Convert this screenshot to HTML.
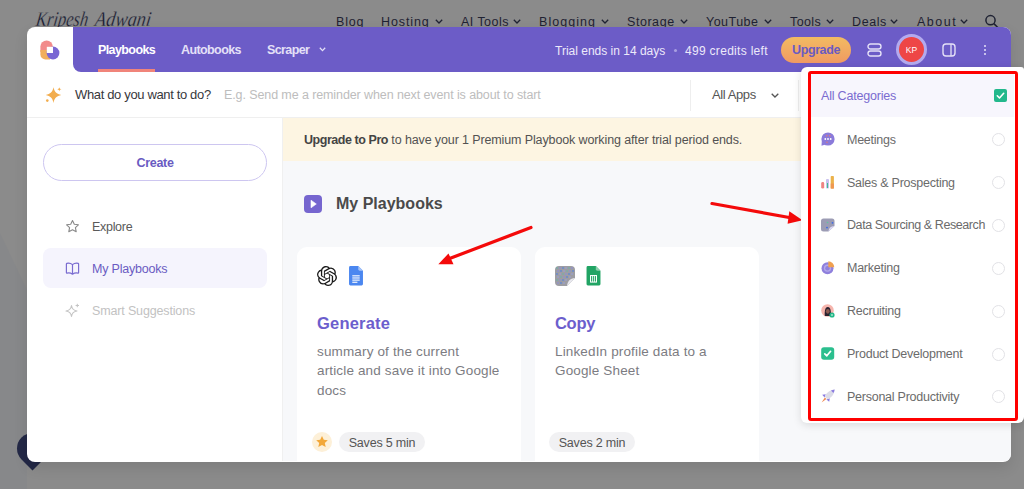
<!DOCTYPE html>
<html><head><meta charset="utf-8">
<style>
*{margin:0;padding:0;box-sizing:border-box}
html,body{width:1024px;height:489px;overflow:hidden}
body{background:#8b8b8b;font-family:"Liberation Sans",sans-serif;position:relative}
.a{position:absolute;white-space:nowrap;line-height:1}
.nav{font-size:12.5px;color:#1f2233;top:16px}
.chev{position:absolute;width:5px;height:5px;border-right:1.4px solid #1f2233;border-bottom:1.4px solid #1f2233;transform:rotate(45deg)}
#win{position:absolute;left:27px;top:27px;width:984px;height:435px;background:#fff;border-radius:8px;overflow:hidden;box-shadow:0 6px 14px rgba(0,0,0,0.1)}
#hdr{position:absolute;left:46px;top:0;width:938px;height:45px;background:#6c5cc7;border-bottom-left-radius:8px}
.tab{font-size:12.5px;font-weight:700;letter-spacing:-0.6px;top:17px}
</style></head>
<body>
<!-- website nav -->
<svg class="a" style="left:0;top:0" width="170" height="30" viewBox="0 0 170 30"><g font-family="Liberation Serif" font-style="italic" font-size="21" fill="#1a1d33" stroke="#8b8b8b" stroke-width="0.3" paint-order="fill stroke" transform="skewX(-8)"><text x="39" y="26" textLength="52" lengthAdjust="spacingAndGlyphs">Kripesh</text><text x="98" y="26" textLength="56" lengthAdjust="spacingAndGlyphs">Adwani</text></g></svg>
<div class="a nav" style="left:336px;letter-spacing:0.85px">Blog</div>
<div class="a nav" style="left:381px;letter-spacing:0.9px">Hosting</div>
<div class="a nav" style="left:461px;letter-spacing:0.45px">AI Tools</div>
<div class="a nav" style="left:539px;letter-spacing:1.05px">Blogging</div>
<div class="a nav" style="left:627px;letter-spacing:0.55px">Storage</div>
<div class="a nav" style="left:706px;letter-spacing:0.48px">YouTube</div>
<div class="a nav" style="left:790px;letter-spacing:0.38px">Tools</div>
<div class="a nav" style="left:852px;letter-spacing:0.6px">Deals</div>
<div class="a nav" style="left:917px;letter-spacing:1.5px">About</div>
<svg class="a" style="left:434.5px;top:18.6px" width="8" height="5" viewBox="0 0 8 5"><path d="M0.8 0.8 L4 4 L7.2 0.8" fill="none" stroke="#1f2233" stroke-width="1.3"/></svg><svg class="a" style="left:512.7px;top:18.6px" width="8" height="5" viewBox="0 0 8 5"><path d="M0.8 0.8 L4 4 L7.2 0.8" fill="none" stroke="#1f2233" stroke-width="1.3"/></svg><svg class="a" style="left:600.5px;top:18.6px" width="8" height="5" viewBox="0 0 8 5"><path d="M0.8 0.8 L4 4 L7.2 0.8" fill="none" stroke="#1f2233" stroke-width="1.3"/></svg><svg class="a" style="left:680.0px;top:18.6px" width="8" height="5" viewBox="0 0 8 5"><path d="M0.8 0.8 L4 4 L7.2 0.8" fill="none" stroke="#1f2233" stroke-width="1.3"/></svg><svg class="a" style="left:763.5px;top:18.6px" width="8" height="5" viewBox="0 0 8 5"><path d="M0.8 0.8 L4 4 L7.2 0.8" fill="none" stroke="#1f2233" stroke-width="1.3"/></svg><svg class="a" style="left:826.0px;top:18.6px" width="8" height="5" viewBox="0 0 8 5"><path d="M0.8 0.8 L4 4 L7.2 0.8" fill="none" stroke="#1f2233" stroke-width="1.3"/></svg><svg class="a" style="left:890.0px;top:18.6px" width="8" height="5" viewBox="0 0 8 5"><path d="M0.8 0.8 L4 4 L7.2 0.8" fill="none" stroke="#1f2233" stroke-width="1.3"/></svg><svg class="a" style="left:959.7px;top:18.6px" width="8" height="5" viewBox="0 0 8 5"><path d="M0.8 0.8 L4 4 L7.2 0.8" fill="none" stroke="#1f2233" stroke-width="1.3"/></svg>
<svg class="a" style="left:984px;top:13px" width="16" height="16" viewBox="0 0 16 16"><circle cx="6.5" cy="7.2" r="4.6" fill="none" stroke="#1f2233" stroke-width="1.5"/><line x1="9.9" y1="10.6" x2="14" y2="14.7" stroke="#1f2233" stroke-width="1.5"/></svg>
<!-- chat bubble behind -->
<svg class="a" style="left:0;top:200px" width="200" height="289" viewBox="0 200 200 289"><path d="M0 233 L27 290 L27 489 L0 489Z" fill="#87888a"/></svg>
<div class="a" style="left:17px;top:433px;width:31px;height:31px;background:#232846;border-radius:50% 50% 50% 0;transform:rotate(-45deg)"></div>

<div id="win">
  <div id="hdr">
    <div class="a tab" style="left:25px;color:#fff">Playbooks</div>
    <div class="a" style="left:25px;top:42px;width:57px;height:3px;background:#f0847a"></div>
    <div class="a tab" style="left:108px;color:#e4e0f7">Autobooks</div>
    <div class="a tab" style="left:194px;color:#e4e0f7">Scraper</div>
    <svg class="a" style="left:245.6px;top:19.6px" width="7" height="5" viewBox="0 0 7 5"><path d="M0.8 0.8 L3.5 3.6 L6.2 0.8" fill="none" stroke="#e4e0f7" stroke-width="1.3"/></svg>
    <div class="a" style="left:482px;top:18px;font-size:12px;color:#ece9fa">Trial ends in 14 days</div>
    <div class="a" style="left:601px;top:22px;width:3px;height:3px;border-radius:50%;background:#a99fe2"></div>
    <div class="a" style="left:612px;top:18px;font-size:12px;letter-spacing:0.3px;color:#ece9fa">499 credits left</div>
    <div class="a" style="left:708px;top:10px;width:70px;height:26px;border-radius:13px;background:linear-gradient(#f2bb62,#f09a62)"></div>
    <div class="a" style="left:708px;top:17px;width:70px;text-align:center;font-size:12.5px;font-weight:700;letter-spacing:-0.4px;color:#6a5bc2">Upgrade</div>
    <svg class="a" style="left:794px;top:16px" width="15" height="14" viewBox="0 0 15 14"><rect x="1" y="1" width="13" height="5" rx="2.5" fill="none" stroke="#e4e0f7" stroke-width="1.4"/><rect x="1" y="8" width="13" height="5" rx="2.5" fill="none" stroke="#e4e0f7" stroke-width="1.4"/></svg>
    <div class="a" style="left:823px;top:7px;width:31px;height:31px;border-radius:50%;background:#ee4646;border:3px solid #b3aaee"></div>
    <div class="a" style="left:823px;top:19px;width:31px;text-align:center;font-size:8.5px;color:#fff">KP</div>
    <svg class="a" style="left:869px;top:16px" width="14" height="14" viewBox="0 0 14 14"><rect x="1" y="1" width="12" height="12" rx="3" fill="none" stroke="#e4e0f7" stroke-width="1.4"/><line x1="9" y1="1" x2="9" y2="13" stroke="#e4e0f7" stroke-width="1.3"/></svg>
    <div class="a" style="left:911px;top:18px;width:2px;height:2px;background:#e4e0f7;border-radius:1px"></div>
    <div class="a" style="left:911px;top:22px;width:2px;height:2px;background:#e4e0f7;border-radius:1px"></div>
    <div class="a" style="left:911px;top:26px;width:2px;height:2px;background:#e4e0f7;border-radius:1px"></div>
  </div>

  <!-- logo -->
  <svg class="a" style="left:13px;top:13px" width="20" height="20" viewBox="0 0 20 20">
    <path d="M0.4 6.6 A6.2 6.2 0 0 1 12.8 6.6 V12 H0.4Z" fill="#f28b8b"/>
    <path d="M0.4 10 H10 V19.4 H5.4 A5 5 0 0 1 0.4 14.4Z" fill="#f1ae5c"/>
    <circle cx="13" cy="13" r="6.4" fill="#7967d4"/>
    <rect x="6.8" y="6.8" width="6.2" height="6.2" fill="#fff"/>
  </svg>
  <!-- row 2 -->
  <svg class="a" style="left:17px;top:59px" width="19" height="19" viewBox="0 0 19 19"><path d="M9.5 1.3 C10.4 5.8 12.6 8 17.3 9 C12.6 10 10.4 12.2 9.5 17 C8.6 12.2 6.4 10 1.7 9 C6.4 8 8.6 5.8 9.5 1.3Z" fill="#f2ad4e"/><path d="M15.3 0.9 C15.5 2.4 15.9 2.9 17.5 3.2 C15.9 3.5 15.5 4 15.3 5.5 C15.1 4 14.7 3.5 13.1 3.2 C14.7 2.9 15.1 2.4 15.3 0.9Z" fill="#f2ad4e"/><circle cx="3.3" cy="14.6" r="1.3" fill="#f2ad4e"/></svg>
  <div class="a" style="left:48px;top:61px;font-size:13px;letter-spacing:-0.35px;color:#38383c">What do you want to do?</div>
  <div class="a" style="left:197px;top:62px;font-size:12.5px;letter-spacing:-0.1px;color:#bdbdbd">E.g. Send me a reminder when next event is about to start</div>
  <div class="a" style="left:663px;top:53px;width:1px;height:31px;background:#eeeeee"></div>
  <div class="a" style="left:685px;top:61px;font-size:13px;letter-spacing:-0.4px;color:#555">All Apps</div>
  <svg class="a" style="left:743.5px;top:65.6px" width="8" height="5" viewBox="0 0 8 5"><path d="M0.7 0.7 L4 4 L7.3 0.7" fill="none" stroke="#555" stroke-width="1.3"/></svg>
  <div class="a" style="left:771px;top:53px;width:1px;height:31px;background:#eeeeee"></div>
  <div class="a" style="left:0;top:90px;width:984px;height:1px;background:#efefef"></div>
  <!-- sidebar -->
  <div class="a" style="left:255px;top:90px;width:1px;height:344px;background:#f0f0f0"></div>
  <div class="a" style="left:16px;top:117px;width:224px;height:37px;border-radius:19px;border:1px solid #cdc6f0"></div>
  <div class="a" style="left:16px;top:130px;width:224px;text-align:center;font-size:12.5px;font-weight:700;letter-spacing:-0.3px;color:#6a5bc2">Create</div>
  <svg class="a" style="left:38px;top:192px" width="15" height="15" viewBox="0 0 15 15"><path d="M7.5 1.5 L9.3 5.3 L13.4 5.8 L10.4 8.6 L11.2 12.7 L7.5 10.7 L3.8 12.7 L4.6 8.6 L1.6 5.8 L5.7 5.3Z" fill="none" stroke="#8a8a8a" stroke-width="1.1" stroke-linejoin="round"/></svg>
  <div class="a" style="left:65px;top:194px;font-size:12.5px;letter-spacing:-0.3px;color:#5a5a5a">Explore</div>
  <div class="a" style="left:16px;top:221px;width:224px;height:40px;border-radius:8px;background:#f5f4fd"></div>
  <svg class="a" style="left:38px;top:234px" width="15" height="15" viewBox="0 0 15 15"><path d="M7.5 3.6 C6 2.4 3.8 2 1.8 2.4 C1.5 2.5 1.4 2.7 1.4 3 L1.4 11.6 C1.4 12 1.7 12.2 2 12.1 C4 11.7 6 12.1 7.5 13.2 C9 12.1 11 11.7 13 12.1 C13.3 12.2 13.6 12 13.6 11.6 L13.6 3 C13.6 2.7 13.5 2.5 13.2 2.4 C11.2 2 9 2.4 7.5 3.6Z M7.5 3.6 L7.5 13.2" fill="none" stroke="#7a6cd0" stroke-width="1.2" stroke-linejoin="round"/></svg>
  <div class="a" style="left:65px;top:236px;font-size:12.5px;letter-spacing:-0.2px;color:#6a5bc2">My Playbooks</div>
  <svg class="a" style="left:38px;top:276px" width="15" height="15" viewBox="0 0 15 15"><path d="M6.5 2.5 C7 6.2 8.3 7.5 12 8 C8.3 8.5 7 9.8 6.5 13.5 C6 9.8 4.7 8.5 1 8 C4.7 7.5 6 6.2 6.5 2.5Z" fill="none" stroke="#c4c4c4" stroke-width="1.1" stroke-linejoin="round"/><path d="M12.3 0.8 V4.2 M10.6 2.5 H14" stroke="#c4c4c4" stroke-width="1"/></svg>
  <div class="a" style="left:65px;top:278px;font-size:12.5px;letter-spacing:-0.3px;color:#c2c2c2;letter-spacing:-0.15px">Smart Suggestions</div>
  <!-- main -->
  <div class="a" style="left:256px;top:91px;width:728px;height:343px;background:#f7f8fa"></div>
  <div class="a" style="left:256px;top:91px;width:728px;height:43px;background:#fdf5e2"></div>
  <div class="a" style="left:277px;top:107px;font-size:12.5px;letter-spacing:-0.12px;color:#525252"><b style="letter-spacing:-0.45px;color:#444">Upgrade to Pro</b> to have your 1 Premium Playbook working after trial period ends.</div>
  <div class="a" style="left:277px;top:167.5px;width:18px;height:18px;border-radius:4px;background:#7666cf"></div>
  <svg class="a" style="left:277px;top:167.5px" width="18" height="18" viewBox="0 0 18 18"><path d="M7 5.2 L12.3 9 L7 12.8Z" fill="#fff" stroke="#fff" stroke-width="0.6" stroke-linejoin="round"/></svg>
  <div class="a" style="left:309px;top:168.5px;font-size:16px;font-weight:700;letter-spacing:0px;color:#4a4a4a">My Playbooks</div>
  <!-- card 1 -->
  <div class="a" style="left:270px;top:220px;width:224px;height:240px;border-radius:10px;background:#fff"></div>
  <div class="a" style="left:290px;top:288px;font-size:16.5px;font-weight:700;letter-spacing:0.2px;color:#6c5ecd">Generate</div>
  <div class="a" style="left:290px;top:315px;font-size:13.5px;line-height:19.3px;letter-spacing:0.15px;color:#7c7c82;white-space:normal;width:190px">summary of the current<br>article and save it into Google<br>docs</div>
  <div class="a" style="left:285px;top:405px;width:20px;height:20px;border-radius:50%;background:#fdf0d8"></div>
  <svg class="a" style="left:287px;top:407px" width="16" height="16" viewBox="0 0 16 16"><path d="M8 2 L9.8 5.8 L13.8 6.2 L10.8 9 L11.7 13 L8 11 L4.3 13 L5.2 9 L2.2 6.2 L6.2 5.8Z" fill="#f2a83a"/></svg>
  <div class="a" style="left:312px;top:405px;width:86px;height:20px;border-radius:10px;background:#f1f1f3"></div>
  <div class="a" style="left:312px;top:410px;width:86px;text-align:center;font-size:12.5px;letter-spacing:-0.2px;color:#555">Saves 5 min</div>
  <!-- card icons -->
  <svg class="a" style="left:289.5px;top:238.5px" width="20" height="20" viewBox="0 0 24 24"><path fill="#1a1a1a" d="M22.28 9.82a5.98 5.98 0 0 0-.52-4.91 6.05 6.05 0 0 0-6.51-2.9A6.07 6.07 0 0 0 4.98 4.18a5.98 5.98 0 0 0-4 2.9 6.05 6.05 0 0 0 .74 7.1 5.98 5.98 0 0 0 .51 4.91 6.05 6.05 0 0 0 6.52 2.9A5.98 5.98 0 0 0 13.26 24a6.06 6.06 0 0 0 5.77-4.21 5.99 5.99 0 0 0 4-2.9 6.06 6.06 0 0 0-.75-7.07zM13.26 22.43a4.48 4.48 0 0 1-2.88-1.04l.14-.08 4.78-2.76a.8.8 0 0 0 .39-.68v-6.74l2.02 1.17a.07.07 0 0 1 .04.05v5.58a4.5 4.5 0 0 1-4.49 4.5zM3.6 18.3a4.47 4.47 0 0 1-.54-3.01l.14.09 4.78 2.76a.77.77 0 0 0 .78 0l5.84-3.37v2.33a.08.08 0 0 1-.03.06L9.74 19.95a4.5 4.5 0 0 1-6.14-1.65zM2.34 7.9a4.48 4.48 0 0 1 2.37-1.97V11.6a.77.77 0 0 0 .39.68l5.81 3.35-2.02 1.17a.08.08 0 0 1-.07 0l-4.83-2.79A4.5 4.5 0 0 1 2.34 7.87zm16.6 3.86-5.84-3.39 2.02-1.16a.08.08 0 0 1 .07 0l4.83 2.79a4.49 4.49 0 0 1-.68 8.1v-5.68a.79.79 0 0 0-.4-.66zm2.01-3.02-.14-.09-4.77-2.78a.78.78 0 0 0-.79 0L9.41 9.23V6.9a.07.07 0 0 1 .03-.06l4.83-2.79a4.5 4.5 0 0 1 6.68 4.66zM8.31 12.86 6.29 11.7a.08.08 0 0 1-.04-.06V6.08a4.5 4.5 0 0 1 7.38-3.45l-.14.08L8.7 5.46a.8.8 0 0 0-.39.68zm1.1-2.37 2.6-1.5 2.61 1.5v3l-2.6 1.5-2.61-1.5z"/></svg>
  <svg class="a" style="left:321.5px;top:239px" width="14" height="19.5" viewBox="0 0 15 21"><path d="M1.5 0 H10 L15 5 V19.5 A1.5 1.5 0 0 1 13.5 21 H1.5 A1.5 1.5 0 0 1 0 19.5 V1.5 A1.5 1.5 0 0 1 1.5 0Z" fill="#4b87f0"/><path d="M10 0 L15 5 H11.5 A1.5 1.5 0 0 1 10 3.5Z" fill="#a7c5f8"/><rect x="3.5" y="10" width="8" height="1.2" fill="#fff"/><rect x="3.5" y="12.3" width="8" height="1.2" fill="#fff"/><rect x="3.5" y="14.6" width="8" height="1.2" fill="#fff"/><rect x="3.5" y="16.9" width="5.5" height="1.2" fill="#fff"/></svg>
  <!-- card 2 -->
  <div class="a" style="left:508px;top:220px;width:224px;height:240px;border-radius:10px;background:#fff"></div>
  <div class="a" style="left:528px;top:288px;font-size:16.5px;font-weight:700;letter-spacing:-0.3px;color:#6c5ecd">Copy</div>
  <div class="a" style="left:528px;top:315px;font-size:13.5px;line-height:19.3px;letter-spacing:0.15px;color:#7c7c82;white-space:normal;width:190px">LinkedIn profile data to a<br>Google Sheet</div>
  <svg class="a" style="left:528px;top:238.5px" width="20" height="20" viewBox="0 0 20 20"><path d="M4 0 H16 A4 4 0 0 1 20 4 V12 L12 20 H4 A4 4 0 0 1 0 16 V4 A4 4 0 0 1 4 0Z" fill="#9d9da3"/><circle cx="2" cy="2" r="0.75" fill="#5fb8a8"/><circle cx="5" cy="2" r="0.75" fill="#8a8ae8"/><circle cx="8" cy="2" r="0.75" fill="#3a7af0"/><circle cx="11" cy="2" r="0.75" fill="#9aa0e8"/><circle cx="14" cy="2" r="0.75" fill="#5fb8a8"/><circle cx="17" cy="2" r="0.75" fill="#8a8ae8"/><circle cx="3" cy="5" r="0.75" fill="#8a8ae8"/><circle cx="6" cy="5" r="0.75" fill="#3a7af0"/><circle cx="9" cy="5" r="0.75" fill="#9aa0e8"/><circle cx="12" cy="5" r="0.75" fill="#5fb8a8"/><circle cx="15" cy="5" r="0.75" fill="#8a8ae8"/><circle cx="18" cy="5" r="0.75" fill="#3a7af0"/><circle cx="2" cy="8" r="0.75" fill="#3a7af0"/><circle cx="5" cy="8" r="0.75" fill="#9aa0e8"/><circle cx="8" cy="8" r="0.75" fill="#5fb8a8"/><circle cx="11" cy="8" r="0.75" fill="#8a8ae8"/><circle cx="14" cy="8" r="0.75" fill="#3a7af0"/><circle cx="17" cy="8" r="0.75" fill="#9aa0e8"/><circle cx="3" cy="11" r="0.75" fill="#9aa0e8"/><circle cx="6" cy="11" r="0.75" fill="#5fb8a8"/><circle cx="9" cy="11" r="0.75" fill="#8a8ae8"/><circle cx="12" cy="11" r="0.75" fill="#3a7af0"/><circle cx="15" cy="11" r="0.75" fill="#9aa0e8"/><circle cx="2" cy="14" r="0.75" fill="#5fb8a8"/><circle cx="5" cy="14" r="0.75" fill="#8a8ae8"/><circle cx="8" cy="14" r="0.75" fill="#3a7af0"/><circle cx="11" cy="14" r="0.75" fill="#9aa0e8"/><circle cx="3" cy="17" r="0.75" fill="#8a8ae8"/><circle cx="6" cy="17" r="0.75" fill="#3a7af0"/><circle cx="9" cy="17" r="0.75" fill="#9aa0e8"/><path d="M20 12 L12 20 C12.5 15 15 12.5 20 12Z" fill="#e8e8ee"/></svg>
  <svg class="a" style="left:559px;top:239px" width="15" height="19.5" viewBox="0 0 15 21"><path d="M1.5 0 H10 L15 5 V19.5 A1.5 1.5 0 0 1 13.5 21 H1.5 A1.5 1.5 0 0 1 0 19.5 V1.5 A1.5 1.5 0 0 1 1.5 0Z" fill="#21a464"/><path d="M10 0 L15 5 H11.5 A1.5 1.5 0 0 1 10 3.5Z" fill="#8ed1ae"/><rect x="4.3" y="10.3" width="6.4" height="7" fill="none" stroke="#fff" stroke-width="1.1"/><line x1="6.5" y1="10.3" x2="6.5" y2="17.3" stroke="#fff" stroke-width="0.9"/><line x1="8.5" y1="10.3" x2="8.5" y2="17.3" stroke="#fff" stroke-width="0.9"/></svg>
  <div class="a" style="left:522px;top:405px;width:86px;height:20px;border-radius:10px;background:#f1f1f3"></div>
  <div class="a" style="left:522px;top:410px;width:86px;text-align:center;font-size:12.5px;letter-spacing:-0.2px;color:#555">Saves 2 min</div>
</div>

<svg class="a" style="left:0;top:0" width="1024" height="489" viewBox="0 0 1024 489">
  <line x1="531" y1="227.5" x2="447" y2="259.5" stroke="#f40a0a" stroke-width="3.2" stroke-linecap="round"/>
  <path d="M438.3 264.3 L448.5 253.5 L453.5 264.3Z" fill="#f40a0a"/>
  <line x1="712" y1="203.5" x2="792" y2="218" stroke="#f40a0a" stroke-width="3.2" stroke-linecap="round"/>
  <path d="M802.5 220.3 L789.3 211.3 L787.6 223.7Z" fill="#f40a0a"/>
</svg>
<!-- dropdown -->
<div class="a" style="left:801px;top:67px;width:223px;height:356px;background:#fff;border-radius:6px 3px 6px 6px;box-shadow:0 2px 8px rgba(0,0,0,0.12)">
  <div class="a" style="left:10px;top:7px;width:203px;height:43px;background:#f7f6fd"></div>
  <div class="a" style="left:20px;top:23px;font-size:12.5px;letter-spacing:-0.2px;color:#7a6bd0">All Categories</div>
  <div class="a" style="left:193px;top:22px;width:13px;height:13px;border-radius:2px;background:#22b88c"></div>
  <svg class="a" style="left:193px;top:22px" width="13" height="13" viewBox="0 0 13 13"><path d="M3.3 6.8 L5.5 9 L9.7 4.3" fill="none" stroke="#fff" stroke-width="1.6" stroke-linecap="round" stroke-linejoin="round"/></svg>
  <div class="a" style="left:46px;top:66.5px;font-size:12.5px;letter-spacing:-0.25px;color:#6b6b6b">Meetings</div>
  <div class="a" style="left:191px;top:66.0px;width:13px;height:13px;border-radius:50%;border:1.3px solid #e2e2e6"></div>
  <div class="a" style="left:46px;top:109.5px;font-size:12.5px;letter-spacing:-0.25px;color:#6b6b6b">Sales &amp; Prospecting</div>
  <div class="a" style="left:191px;top:109.0px;width:13px;height:13px;border-radius:50%;border:1.3px solid #e2e2e6"></div>
  <div class="a" style="left:46px;top:152.0px;font-size:12.5px;letter-spacing:-0.25px;color:#6b6b6b;letter-spacing:-0.42px">Data Sourcing &amp; Research</div>
  <div class="a" style="left:191px;top:151.5px;width:13px;height:13px;border-radius:50%;border:1.3px solid #e2e2e6"></div>
  <div class="a" style="left:46px;top:195.0px;font-size:12.5px;letter-spacing:-0.25px;color:#6b6b6b">Marketing</div>
  <div class="a" style="left:191px;top:194.5px;width:13px;height:13px;border-radius:50%;border:1.3px solid #e2e2e6"></div>
  <div class="a" style="left:46px;top:238.0px;font-size:12.5px;letter-spacing:-0.25px;color:#6b6b6b">Recruiting</div>
  <div class="a" style="left:191px;top:237.5px;width:13px;height:13px;border-radius:50%;border:1.3px solid #e2e2e6"></div>
  <div class="a" style="left:46px;top:281.0px;font-size:12.5px;letter-spacing:-0.25px;color:#6b6b6b">Product Development</div>
  <div class="a" style="left:191px;top:280.5px;width:13px;height:13px;border-radius:50%;border:1.3px solid #e2e2e6"></div>
  <div class="a" style="left:46px;top:323.5px;font-size:12.5px;letter-spacing:-0.25px;color:#6b6b6b">Personal Productivity</div>
  <div class="a" style="left:191px;top:323.0px;width:13px;height:13px;border-radius:50%;border:1.3px solid #e2e2e6"></div>
  <svg class="a" style="left:19px;top:65px" width="15" height="15" viewBox="0 0 15 15"><circle cx="8" cy="7" r="6.6" fill="#8a7ada"/><path d="M1.8 9.5 L1.5 13.8 L5.5 12.5Z" fill="#8a7ada"/><circle cx="5.3" cy="7" r="0.9" fill="#fff"/><circle cx="8" cy="7" r="0.9" fill="#fff"/><circle cx="10.7" cy="7" r="0.9" fill="#fff"/><circle cx="6.8" cy="3.8" r="0.7" fill="#f07a6a"/><circle cx="9.8" cy="3.8" r="0.7" fill="#f07a6a"/><circle cx="7" cy="10.2" r="0.7" fill="#f07a6a"/></svg>
  <svg class="a" style="left:20px;top:109px" width="14" height="13" viewBox="0 0 14 13"><rect x="0.2" y="6" width="3" height="6.6" rx="1.4" fill="#ef8383"/><rect x="5" y="3" width="3" height="9.6" rx="1" fill="#c9c0ef"/><rect x="6" y="7" width="1" height="5" fill="#3bbf8f"/><rect x="9.7" y="0" width="3.2" height="12.6" rx="0.8" fill="#ebb24a"/><rect x="9.7" y="7.5" width="3.2" height="5.1" fill="#ef9750"/></svg>
  <svg class="a" style="left:20px;top:151px" width="14" height="14" viewBox="0 0 14 14"><path d="M2.5 0.5 H11 A2.5 2.5 0 0 1 13.5 3 V8 L7.5 13.5 H2.5 A2.5 2.5 0 0 1 0 11 V3 A2.5 2.5 0 0 1 2.5 0.5Z" fill="#9c9cb4"/><path d="M13.5 8 L7.5 13.5 C7.8 10 9.5 8.3 13.5 8Z" fill="#dcd8f6"/><circle cx="11.5" cy="4.8" r="0.9" fill="#3a6ae8"/><circle cx="6" cy="9.6" r="0.9" fill="#3a6ae8"/><circle cx="6.5" cy="4.5" r="0.8" fill="#5ec8a0"/></svg>
  <svg class="a" style="left:20px;top:194px" width="14" height="14" viewBox="0 0 14 14"><circle cx="6.5" cy="7.2" r="6" fill="#8f80dd"/><circle cx="6.5" cy="7.2" r="3.6" fill="#b3a8ea"/><circle cx="6.5" cy="7.2" r="2.2" fill="#8f80dd"/><path d="M7.3 0.2 A6.3 6.3 0 0 1 13.3 6.3 L7.3 6.3Z" fill="#f0a050"/></svg>
  <svg class="a" style="left:20px;top:237px" width="14" height="14" viewBox="0 0 14 14"><circle cx="6.5" cy="6.5" r="6.3" fill="#f6b5ad"/><path d="M3.8 12 C3.5 8 3.8 3 6.8 3 C9.8 3 10.2 8 9.6 12Z" fill="#2a2230"/><ellipse cx="6.8" cy="7.3" rx="1.9" ry="2.4" fill="#8a5a50"/><circle cx="11" cy="11" r="2.6" fill="#22b888"/><circle cx="11" cy="11" r="0.8" fill="#fff"/></svg>
  <svg class="a" style="left:20px;top:280px" width="14" height="14" viewBox="0 0 14 14"><rect x="0.2" y="0.2" width="13" height="12.6" rx="2.8" fill="#2bbf8e"/><path d="M3.8 6.8 L5.8 8.8 L9.6 4.3" fill="none" stroke="#fff" stroke-width="1.7" stroke-linecap="round" stroke-linejoin="round"/></svg>
  <svg class="a" style="left:20px;top:322px" width="14" height="14" viewBox="0 0 14 14"><path d="M4.8 5.2 L1.2 5.8 L3.6 8.6Z" fill="#8a7ae0"/><path d="M8.8 9.2 L8.2 12.8 L5.4 10.4Z" fill="#8a7ae0"/><path d="M13.6 0.4 C9.5 0.6 5.8 3 3.8 7.4 L6.6 10.2 C11 8.2 13.4 4.5 13.6 0.4Z" fill="#dcdce8"/><path d="M13.6 0.4 C12.4 0.5 11.2 0.9 10 1.6 L12.4 4 C13.1 2.8 13.5 1.6 13.6 0.4Z" fill="#8a7ae0"/><path d="M3.9 8.6 L0.6 13.4 L5.4 10.1Z" fill="#f08850"/></svg>
  <div class="a" style="left:7px;top:4px;width:210px;height:350px;border:3px solid #f00;border-radius:3px"></div>
</div>
</body></html>
